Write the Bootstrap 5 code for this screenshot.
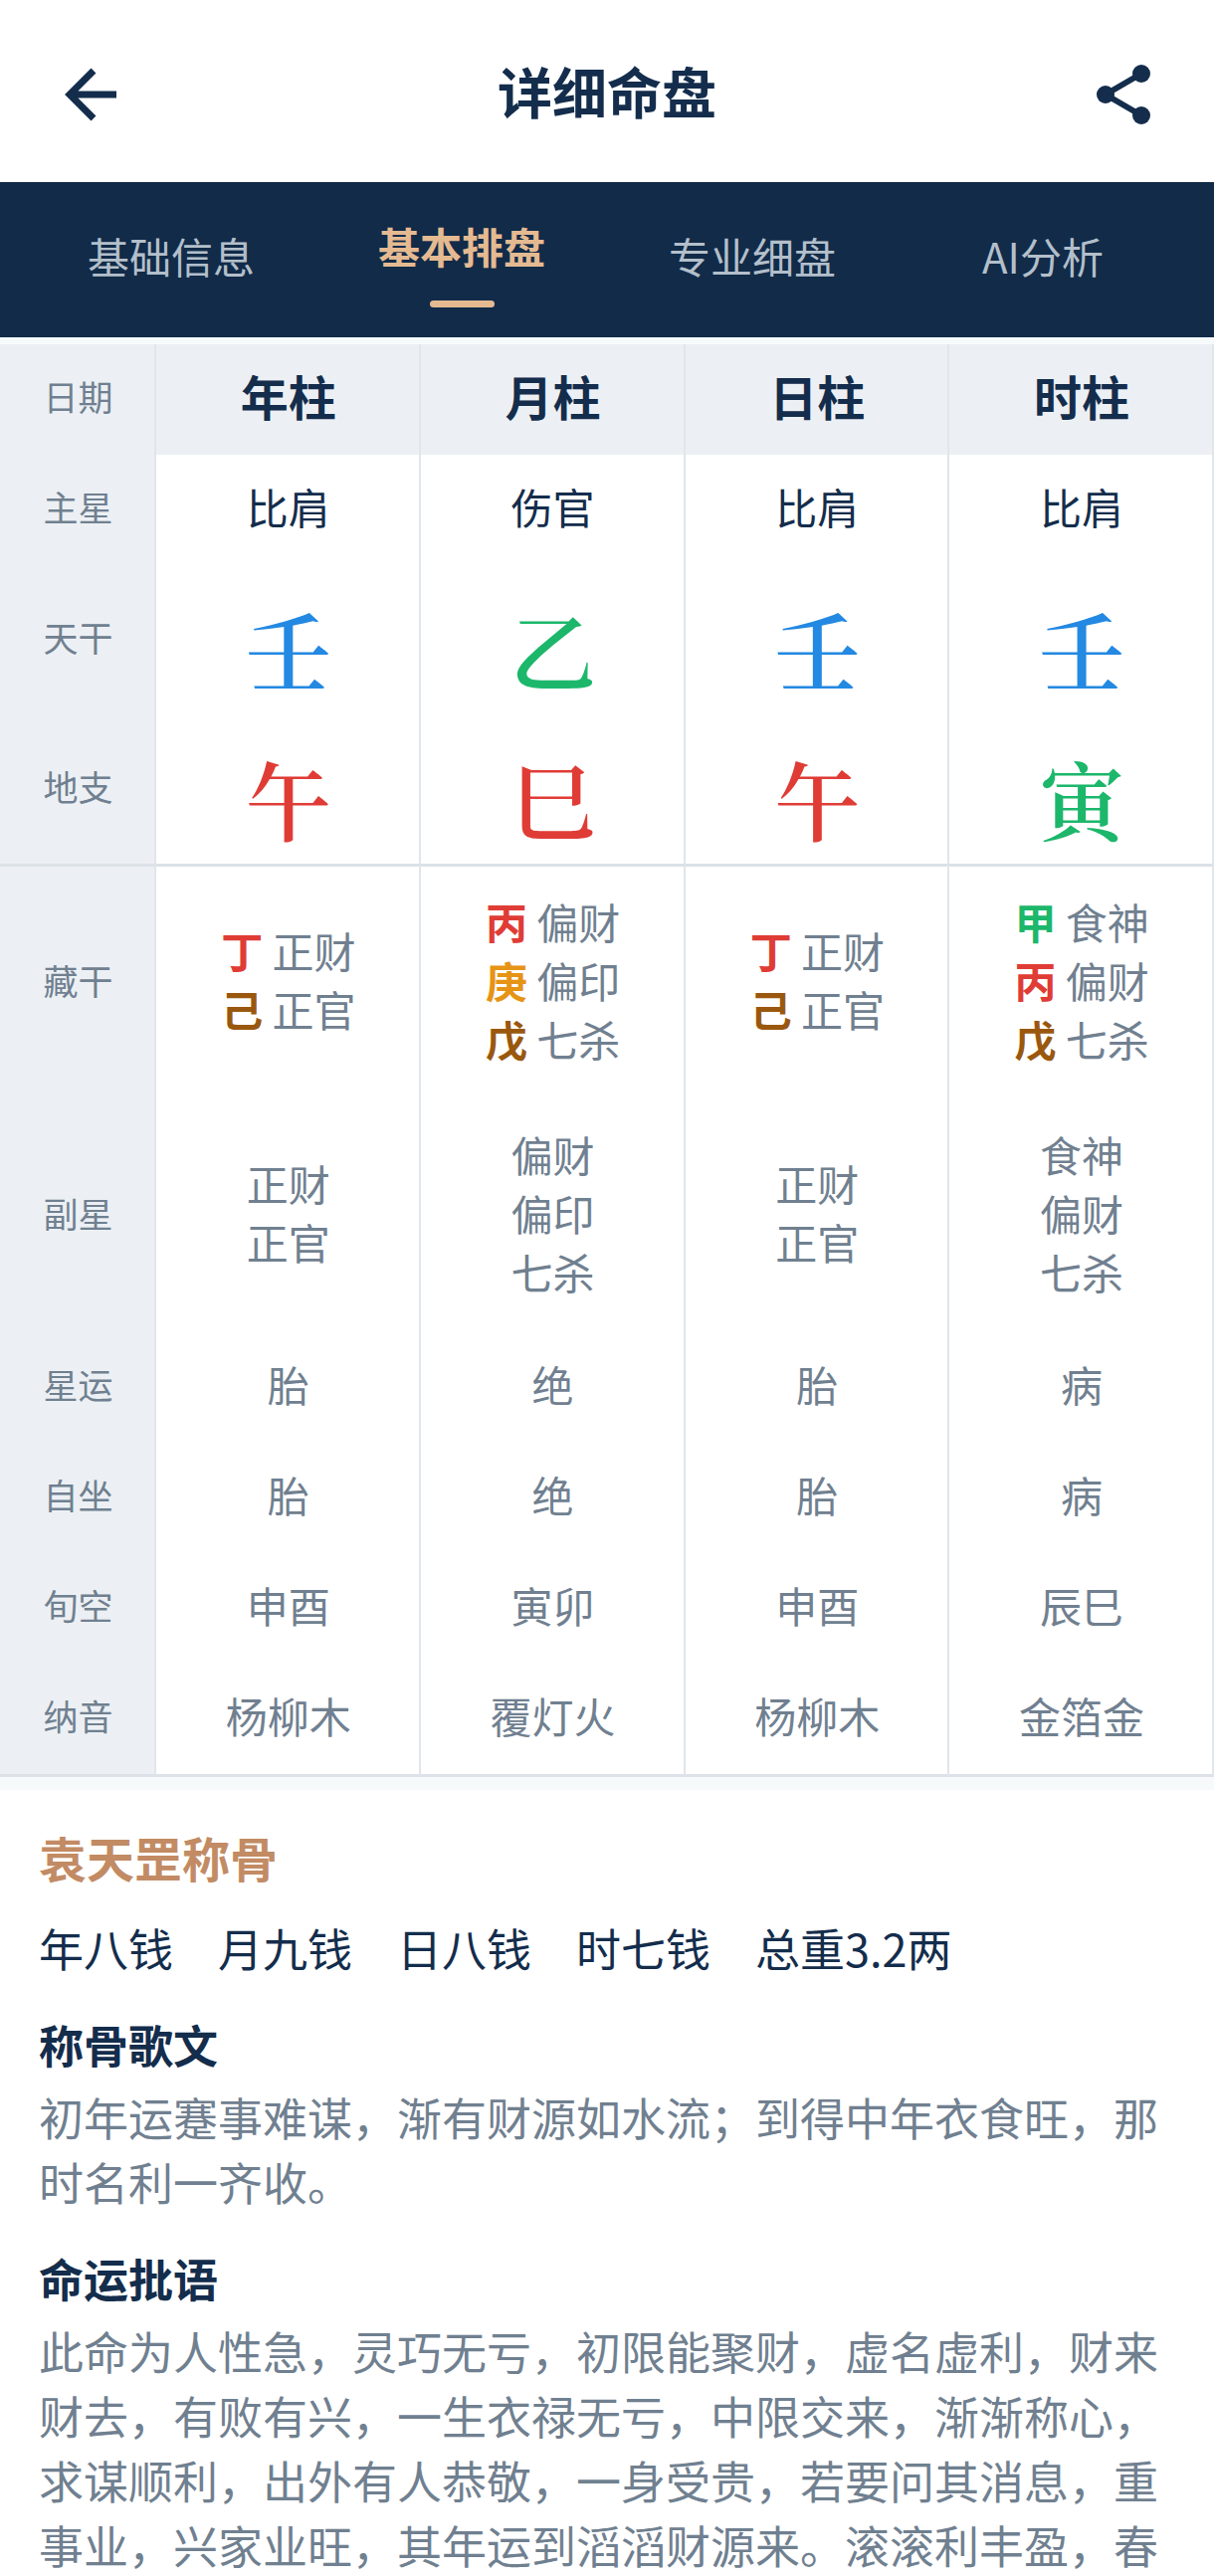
<!DOCTYPE html>
<html lang="zh-CN">
<head>
<meta charset="utf-8">
<meta name="viewport" content="width=device-width, initial-scale=1">
<title>详细命盘</title>
<link href="https://cdn.jsdelivr.net/npm/bootstrap@5.3.0/dist/css/bootstrap.min.css" rel="stylesheet">
<style>
  :root { --navy: #142d4c; --slate: #708090; --line: #e0e6ea; --rule: #dce2e7; --pale: #ecf0f4; --wash: #f6fafb; }
  body { font-family: "Noto Sans CJK SC", "Noto Sans", sans-serif; color: var(--navy); background: var(--wash); }
  .top-bar { height: 183px; padding: 6px 54px 0; }
  .top-bar h1 { font-size: 55px; line-height: 80px; font-weight: 700; padding-bottom: 10px; }
  .icon-btn { width: 76px; height: 76px; color: var(--navy); border: 0; }
  .tab-bar { height: 156px; padding: 0 26px; background: #112b49; }
  .tab-bar a { color: #b3bfca; font-size: 42px; line-height: 60px; padding-bottom: 8px; }
  .tab-bar a.active { color: #e5ba91; font-weight: 700; padding: 4px 0 0; }
  .tab-bar a.active::after { content: ""; width: 65px; height: 7px; margin-top: 25px; border-radius: 4px; background: #e5ba91; }
  .chart { margin-top: 7px; table-layout: fixed; border-collapse: separate; border-spacing: 0; background: #fff; }
  .chart .label-col { width: 157px; }
  .chart th, .chart td { height: 111px; padding: 0 0 8px 2px; text-align: center; vertical-align: middle; border-right: 2px solid var(--line); font-size: 42px; line-height: 59px; font-weight: 400; color: var(--slate); }
  .chart th { background: var(--pale); font-size: 35px; }
  .chart thead th + th { font-size: 48px; font-weight: 700; color: var(--navy); }
  .chart .main-star td { color: var(--navy); }
  .chart .pillar > * { height: 150px; }
  .chart .pillar td { padding: 18px 0 0 2px; font-family: "Noto Serif CJK SC", "Noto Serif SC", "Noto Sans CJK SC", serif; font-size: 86px; line-height: 120px; font-weight: 600; }
  .chart .hidden-stems > * { height: 237px; border-top: 3px solid var(--rule); }
  .chart .sub-stars > * { height: 234px; }
  .chart tbody tr:last-child > * { height: 114px; border-bottom: 3px solid var(--rule); }
  .chart b { font-weight: 700; }
  .chart .water { color: #2389e2; }
  .chart .wood { color: #1cb76b; }
  .chart .fire { color: #e03c36; }
  .chart .metal { color: #e69415; }
  .chart .earth { color: #9a580e; }
  .reading { margin-top: 13px; padding: 32px 39px 0; font-size: 45px; line-height: 65px; }
  .reading h2 { font-size: 48px; line-height: 70px; font-weight: 700; color: #c28b64; margin: 0 0 24px; }
  .reading h3 { font-size: 45px; line-height: 65px; font-weight: 700; margin: 32px 0 8px; }
  .reading p { color: var(--slate); margin: 0; }
  .weights { gap: 45px; }
</style>
</head>
<body class="d-flex flex-column vh-100 overflow-hidden">
<header class="top-bar bg-white d-flex align-items-center justify-content-between flex-shrink-0">
  <button type="button" class="icon-btn bg-transparent p-0" aria-label="返回">
    <svg class="d-block" width="76" height="76" viewBox="0 0 76 76" fill="none" stroke="currentColor" stroke-width="7"><path d="M63 38H16M40 14 16 38l24 24"/></svg>
  </button>
  <h1 class="m-0">详细命盘</h1>
  <button type="button" class="icon-btn bg-transparent p-0" aria-label="分享">
    <svg class="d-block" width="76" height="76" viewBox="0 0 76 76" fill="currentColor"><path d="M57 17 21 38l36 21" fill="none" stroke="currentColor" stroke-width="6"/><circle cx="57" cy="17" r="9"/><circle cx="21" cy="38" r="9"/><circle cx="57" cy="59" r="9"/></svg>
  </button>
</header>
<nav class="tab-bar d-flex flex-shrink-0" aria-label="命盘分类">
  <a href="#info" class="col-3 d-flex flex-column align-items-center justify-content-center text-decoration-none">基础信息</a>
  <a href="#basic" class="active col-3 d-flex flex-column align-items-center justify-content-center text-decoration-none" aria-current="page">基本排盘</a>
  <a href="#pro" class="col-3 d-flex flex-column align-items-center justify-content-center text-decoration-none">专业细盘</a>
  <a href="#ai" class="col-3 d-flex flex-column align-items-center justify-content-center text-decoration-none">AI分析</a>
</nav>
<main id="basic" class="flex-grow-1 d-flex flex-column">
  <table class="chart w-100 flex-shrink-0">
    <colgroup><col class="label-col"><col><col><col><col></colgroup>
    <thead>
      <tr><th scope="col">日期</th><th scope="col">年柱</th><th scope="col">月柱</th><th scope="col">日柱</th><th scope="col">时柱</th></tr>
    </thead>
    <tbody>
      <tr class="main-star"><th scope="row">主星</th><td>比肩</td><td>伤官</td><td>比肩</td><td>比肩</td></tr>
      <tr class="pillar"><th scope="row">天干</th><td class="water">壬</td><td class="wood">乙</td><td class="water">壬</td><td class="water">壬</td></tr>
      <tr class="pillar"><th scope="row">地支</th><td class="fire">午</td><td class="fire">巳</td><td class="fire">午</td><td class="wood">寅</td></tr>
      <tr class="hidden-stems"><th scope="row">藏干</th>
        <td><b class="fire">丁</b> 正财<br><b class="earth">己</b> 正官</td>
        <td><b class="fire">丙</b> 偏财<br><b class="metal">庚</b> 偏印<br><b class="earth">戊</b> 七杀</td>
        <td><b class="fire">丁</b> 正财<br><b class="earth">己</b> 正官</td>
        <td><b class="wood">甲</b> 食神<br><b class="fire">丙</b> 偏财<br><b class="earth">戊</b> 七杀</td></tr>
      <tr class="sub-stars"><th scope="row">副星</th><td>正财<br>正官</td><td>偏财<br>偏印<br>七杀</td><td>正财<br>正官</td><td>食神<br>偏财<br>七杀</td></tr>
      <tr><th scope="row">星运</th><td>胎</td><td>绝</td><td>胎</td><td>病</td></tr>
      <tr><th scope="row">自坐</th><td>胎</td><td>绝</td><td>胎</td><td>病</td></tr>
      <tr><th scope="row">旬空</th><td>申酉</td><td>寅卯</td><td>申酉</td><td>辰巳</td></tr>
      <tr><th scope="row">纳音</th><td>杨柳木</td><td>覆灯火</td><td>杨柳木</td><td>金箔金</td></tr>
    </tbody>
  </table>
  <section class="reading bg-white flex-grow-1">
    <h2>袁天罡称骨</h2>
    <div class="weights d-flex"><span>年八钱</span><span>月九钱</span><span>日八钱</span><span>时七钱</span><span>总重3.2两</span></div>
    <h3>称骨歌文</h3>
    <p>初年运蹇事难谋，渐有财源如水流；到得中年衣食旺，那时名利一齐收。</p>
    <h3>命运批语</h3>
    <p>此命为人性急，灵巧无亏，初限能聚财，虚名虚利，财来财去，有败有兴，一生衣禄无亏，中限交来，渐渐称心，求谋顺利，出外有人恭敬，一身受贵，若要问其消息，重事业，兴家业旺，其年运到滔滔财源来。滚滚利丰盈，春</p>
  </section>
</main>
<script src="https://cdn.jsdelivr.net/npm/bootstrap@5.3.0/dist/js/bootstrap.bundle.min.js"></script>
</body>
</html>
